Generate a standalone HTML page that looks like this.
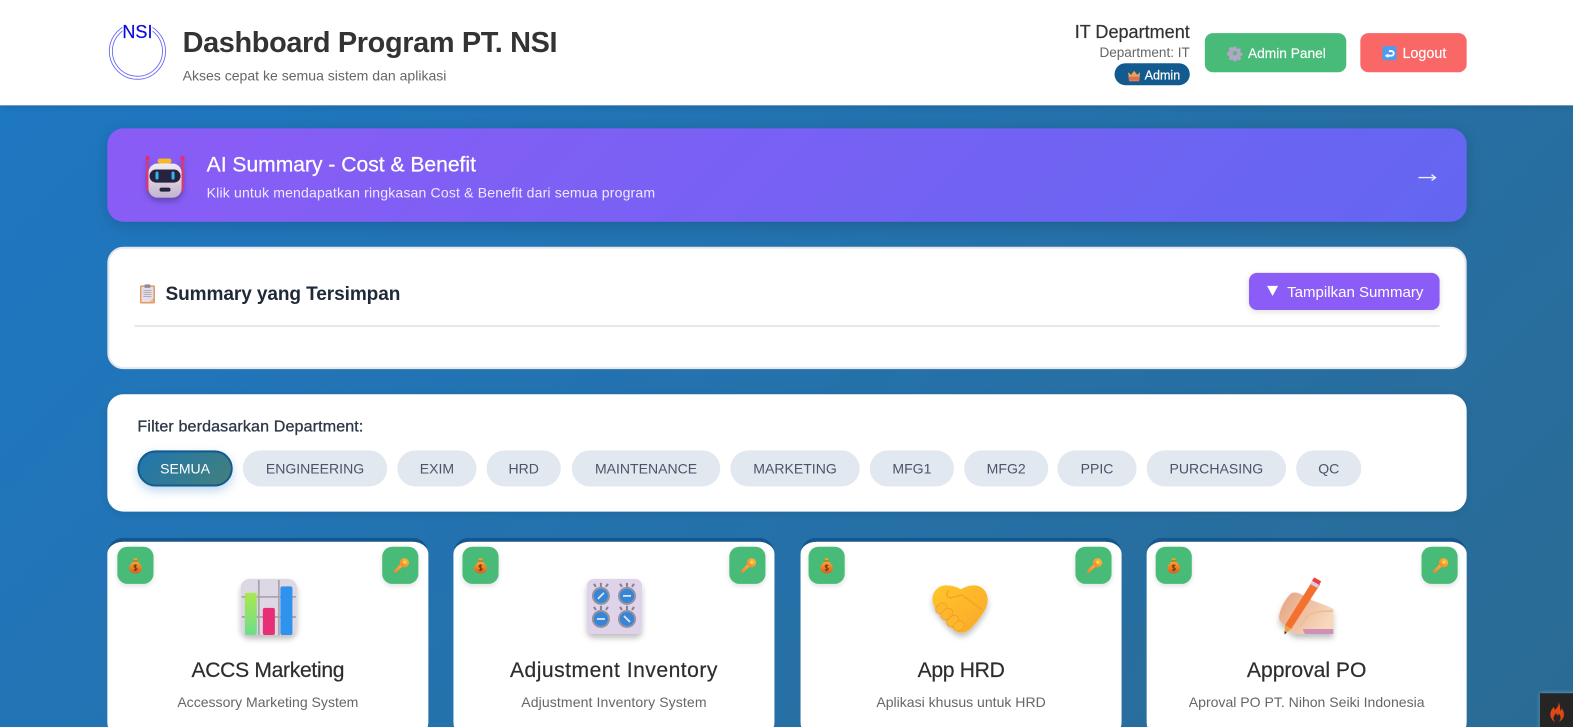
<!DOCTYPE html>
<html lang="id"><head><meta charset="utf-8"><title>Dashboard Program PT. NSI</title>
<style>
*{box-sizing:border-box;margin:0;padding:0}
html,body{width:1573px;height:727px;overflow:hidden}
body{position:relative;font-family:"Liberation Sans",sans-serif;background:linear-gradient(135deg,#1e78c4 0%,#2a6b94 100%);}
#w{position:absolute;left:0;top:0;width:1568px;height:725px;transform:scale(1.00319);transform-origin:0 0}
.a{position:absolute}
.t{position:absolute;white-space:nowrap;line-height:1}
.c{text-align:center}
.p{position:absolute;top:449px;height:36px;border-radius:18px;background:#e2e8f0;color:#4a5568;font-size:14px;line-height:36px;text-align:center}
.card{position:absolute;top:536px;height:200px;background:#fff;border-radius:16px;border-top:4px solid #15578c}
.g{position:absolute;top:545px;width:36px;height:37px;border-radius:10px;background:#48bb78;box-shadow:0 2px 5px rgba(0,0,0,.12)}
.h{font-size:21px;color:#2d2d2d;-webkit-text-stroke:.2px #2d2d2d;line-height:24px;top:657px}
.d{font-size:14px;color:#666;top:693px}
svg{position:absolute;display:block;overflow:visible}
</style></head><body>
<svg width="0" height="0" style="position:absolute">
<defs>
<linearGradient id="bag" x1="0" y1="0" x2="0" y2="1"><stop offset="0" stop-color="#f9a532"/><stop offset="1" stop-color="#d9601f"/></linearGradient>
<linearGradient id="key" x1="0" y1="1" x2="1" y2="0"><stop offset="0" stop-color="#f47c3c"/><stop offset="1" stop-color="#fbc02d"/></linearGradient>
<linearGradient id="gb" x1="0" y1="0" x2="0" y2="1"><stop offset="0" stop-color="#a9e84f"/><stop offset="1" stop-color="#6fdc8c"/></linearGradient>
<linearGradient id="hy" x1="0" y1="0" x2="1" y2="1"><stop offset="0" stop-color="#ffc62c"/><stop offset="1" stop-color="#fba72a"/></linearGradient>
<linearGradient id="skin" x1="0" y1="0" x2="1" y2=".5"><stop offset="0" stop-color="#e4a27e"/><stop offset="1" stop-color="#f8d8bd"/></linearGradient>
<linearGradient id="rob" x1="0" y1="0" x2="0" y2="1"><stop offset="0" stop-color="#f0ebf2"/><stop offset="1" stop-color="#c4b3cc"/></linearGradient>
<filter id="ds" x="-30%" y="-30%" width="160%" height="170%"><feDropShadow dx="0" dy="4" stdDeviation="3" flood-color="#000" flood-opacity=".25"/></filter>
<symbol id="bagI" viewBox="0 0 14 16"><path d="M5 0.5h4L8.4 3h-2.800z" fill="#f5a623"/><rect x="5" y="2.600" width="4" height="1.300" rx=".6" fill="#b5651d"/><path d="M5.200 3.800C2.500 5.500.6 8 .6 10.600c0 3 2.600 4.900 6.400 4.900s6.400-1.900 6.400-4.900c0-2.600-1.900-5.100-4.600-6.800z" fill="url(#bag)"/><path d="M8.700 7.800C8.300 7.100 5.600 7 5.600 8.500c0 1.700 3 1 3 2.700 0 1.500-2.800 1.400-3.300.6M7 6.600v6.600" stroke="#7c3512" stroke-width="1" fill="none"/></symbol>
<symbol id="keyI" viewBox="0 0 16 16"><path d="M1.500 14.800l-.9-.9a.9.9 0 0 1 0-1.200L8 5.500l2.300 2.300-7.500 7a.9.900 0 0 1-1.300 0z" fill="url(#key)"/><circle cx="11" cy="5" r="4.600" fill="url(#key)"/><circle cx="11.400" cy="4.400" r="1.700" fill="#fcd34d"/></symbol>
<symbol id="gearI" viewBox="0 0 16 16"><path d="M6.600.8h2.800l.4 2 1.300.6 1.800-1.100 2 2-1.100 1.800.6 1.300 2 .4v2.800l-2 .4-.6 1.300 1.100 1.800-2 2-1.800-1.100-1.300.6-.4 2H6.600l-.4-2-1.300-.6-1.800 1.100-2-2 1.100-1.800-.6-1.300-2-.4V6.600l2-.4.600-1.300L1.100 3.100l2-2 1.800 1.100 1.300-.6z" transform="translate(.7 .7) scale(.91)" fill="#b3a5c4"/><circle cx="8" cy="8" r="2.300" fill="#48bb78" opacity=".75"/></symbol>
</defs></svg>
<div id="w">
<!-- Header -->
<div class="a" style="left:0;top:0;width:1568px;height:104.700px;background:#fff;box-shadow:0 2px 6px rgba(0,0,0,.1)"></div>
<svg style="left:107px;top:20px" width="60" height="62" viewBox="0 0 60 62">
<circle cx="30" cy="31" r="28" fill="none" stroke="#6a6af5" stroke-width=".9"/>
<circle cx="30" cy="31" r="25" fill="none" stroke="#6a6af5" stroke-width=".9"/>
<rect x="15" y="0" width="30" height="15" fill="#fff"/>
<text x="30" y="18" text-anchor="middle" font-family="Liberation Sans,sans-serif" font-size="18" fill="#0a0ae0" stroke="#0a0ae0" stroke-width=".2">NSI</text>
</svg>
<div class="t" style="left:182px;top:27px;font-size:28.800px;font-weight:700;color:#333;line-height:32px;letter-spacing:-.36px">Dashboard Program PT. NSI</div>
<div class="t" style="left:182px;top:68px;font-size:14px;color:#666">Akses cepat ke semua sistem dan aplikasi</div>
<div class="t" style="right:382px;top:23px;font-size:18px;color:#333;-webkit-text-stroke:.2px #333">IT Department</div>
<div class="t" style="right:382px;top:46px;font-size:13.500px;color:#666">Department: IT</div>
<div class="a" style="left:1111px;top:63px;width:75px;height:22px;border-radius:11px;background:#135a8e"></div>
<svg style="left:1124px;top:70px" width="13" height="11" viewBox="0 0 13 11"><path d="M.5 2l3 2.500L6.500.5l3 4 3-2.500-1 9h-10z" fill="#f0a050"/><rect x="1.500" y="6.500" width="10" height="4" fill="#d9705a"/></svg>
<div class="t" style="left:1141px;top:69px;font-size:12.500px;color:#fff;-webkit-text-stroke:.2px #fff">Admin</div>
<div class="a" style="left:1201px;top:33px;width:141px;height:39px;border-radius:8px;background:#48bb78"></div>
<svg style="left:1223px;top:45px" width="16" height="16"><use href="#gearI" width="16" height="16"/></svg>
<div class="t" style="left:1244px;top:47px;font-size:13.700px;color:#fff;-webkit-text-stroke:.15px #fff">Admin Panel</div>
<div class="a" style="left:1356px;top:33px;width:106px;height:39px;border-radius:8px;background:#f96767"></div>
<svg style="left:1378px;top:46px" width="14" height="14" viewBox="0 0 14 14"><rect width="14" height="14" rx="2" fill="#4c9df0"/><path d="M3 9.500h6a2.300 2.300 0 0 0 0-4.600H6.500" stroke="#fff" stroke-width="1.800" fill="none"/><path d="M6 7.500L2.800 9.500 6 11.800z" fill="#fff"/></svg>
<div class="t" style="left:1398px;top:47px;font-size:14.300px;color:#fff;-webkit-text-stroke:.15px #fff">Logout</div>

<!-- AI banner -->
<div class="a" style="left:107px;top:128px;width:1355px;height:92.500px;border-radius:16px;background:linear-gradient(135deg,#8b5cf6,#6366f1);box-shadow:0 4px 15px rgba(0,0,0,.15)"></div>
<svg style="left:141px;top:154px" width="46" height="46" viewBox="0 0 46 46">
<g filter="url(#ds)"><rect x="5" y="4" width="2" height="32" rx="1" fill="#e8325f"/><rect x="40" y="4" width="2" height="32" rx="1" fill="#e8325f"/><circle cx="6" cy="3.500" r="2" fill="#f0286a"/><circle cx="41" cy="3.500" r="2" fill="#f0286a"/><rect x="16" y="4" width="14" height="5" rx="2.500" fill="#f2b92b"/><rect x="7" y="9" width="33" height="34" rx="9" fill="url(#rob)"/></g>
<rect x="8" y="15" width="31" height="13" rx="6.500" fill="#27223f"/><rect x="14" y="17" width="3" height="8" rx="1.500" fill="#2fb5f0"/><rect x="30" y="17" width="3" height="8" rx="1.500" fill="#2fb5f0"/><rect x="18" y="33" width="11" height="4" rx="2" fill="#27223f"/></svg>
<div class="t" style="left:206px;top:152.500px;font-size:21px;color:#fff;-webkit-text-stroke:.25px #fff;line-height:24px">AI Summary - Cost &amp; Benefit</div>
<div class="t" style="left:206px;top:184.500px;font-size:14px;color:#f0eaff;letter-spacing:.16px">Klik untuk mendapatkan ringkasan Cost &amp; Benefit dari semua program</div>
<svg style="left:1414px;top:171px" width="18" height="12" viewBox="0 0 18 12"><path d="M0 6h16" stroke="#eef" stroke-width="1.400"/><path d="M13 3l4 3-4 3" stroke="#eef" stroke-width="1.300" fill="none"/></svg>

<!-- Saved summary -->
<div class="a" style="left:107px;top:246px;width:1355px;height:122px;border-radius:16px;background:#fff;border:2px solid #e5e7eb"></div>
<svg style="left:139px;top:283px" width="18" height="20" viewBox="0 0 18 20"><rect x=".5" y="1.500" width="15" height="18" rx="1.500" fill="#e39a63"/><rect x="2" y="3" width="12" height="15" fill="#e3deea"/><rect x="5" y=".5" width="6" height="3.500" rx="1" fill="#8d8a99"/><path d="M4 6.500h8M4 8.500h8M4 10.500h8M4 12.500h8" stroke="#a8a3b5" stroke-width=".9"/><path d="M10 18l4-4v4z" fill="#f2b888"/></svg>
<div class="t" style="left:165px;top:283px;font-size:19px;font-weight:700;color:#1f2937;line-height:22px;letter-spacing:-.1px">Summary yang Tersimpan</div>
<div class="a" style="left:134px;top:324px;width:1301px;height:2px;background:#e5e7eb"></div>
<div class="a" style="left:1245px;top:272px;width:190px;height:37px;border-radius:8px;background:#8b5cf6;box-shadow:0 2px 6px rgba(0,0,0,.12)"></div>
<svg style="left:1263px;top:285px" width="11" height="10" viewBox="0 0 11 10"><path d="M0 0h11L5.500 10z" fill="#fff"/></svg>
<div class="t" style="left:1283px;top:284px;font-size:15px;color:#fff">Tampilkan Summary</div>

<!-- Filter -->
<div class="a" style="left:107px;top:393px;width:1355px;height:117px;border-radius:16px;background:#fff;box-shadow:0 2px 8px rgba(0,0,0,.08)"></div>
<div class="t" style="left:137px;top:418px;font-size:16px;letter-spacing:.13px;color:#2d3748;-webkit-text-stroke:.3px #2d3748">Filter berdasarkan Department:</div>
<div class="p" style="left:137px;width:95px;background:linear-gradient(135deg,#2076ae,#43807c);border:2px solid #135a8e;color:#fff;line-height:32px;box-shadow:0 4px 10px rgba(30,120,196,.3)">SEMUA</div>
<div class="p" style="left:242px;width:144px">ENGINEERING</div>
<div class="p" style="left:396px;width:79px">EXIM</div>
<div class="p" style="left:485px;width:74px">HRD</div>
<div class="p" style="left:570px;width:148px">MAINTENANCE</div>
<div class="p" style="left:728px;width:129px">MARKETING</div>
<div class="p" style="left:867px;width:84px">MFG1</div>
<div class="p" style="left:961px;width:84px">MFG2</div>
<div class="p" style="left:1054px;width:79px">PPIC</div>
<div class="p" style="left:1143px;width:139px">PURCHASING</div>
<div class="p" style="left:1292px;width:65px">QC</div>

<!-- Cards -->
<div class="card" style="left:107px;width:320px"></div>
<div class="card" style="left:452px;width:320px"></div>
<div class="card" style="left:798px;width:320px"></div>
<div class="card" style="left:1143px;width:319px"></div>

<div class="g" style="left:117px"></div><svg style="left:128px;top:556px" width="14" height="16"><use href="#bagI" width="14" height="16"/></svg>
<div class="g" style="left:381px"></div><svg style="left:392px;top:556px" width="16" height="16"><use href="#keyI" width="16" height="16"/></svg>
<div class="g" style="left:461px"></div><svg style="left:472px;top:556px" width="14" height="16"><use href="#bagI" width="14" height="16"/></svg>
<div class="g" style="left:727px"></div><svg style="left:738px;top:556px" width="16" height="16"><use href="#keyI" width="16" height="16"/></svg>
<div class="g" style="left:806px"></div><svg style="left:817px;top:556px" width="14" height="16"><use href="#bagI" width="14" height="16"/></svg>
<div class="g" style="left:1072px"></div><svg style="left:1083px;top:556px" width="16" height="16"><use href="#keyI" width="16" height="16"/></svg>
<div class="g" style="left:1152px"></div><svg style="left:1163px;top:556px" width="14" height="16"><use href="#bagI" width="14" height="16"/></svg>
<div class="g" style="left:1417px"></div><svg style="left:1428px;top:556px" width="16" height="16"><use href="#keyI" width="16" height="16"/></svg>

<!-- Chart icon -->
<svg style="left:239.500px;top:576.500px" width="56" height="56" viewBox="0 0 56 56">
<g filter="url(#ds)"><rect width="56" height="56" rx="9" fill="#ddd8e4"/></g>
<path d="M18 1v55M38 1v55M1 18h54M1 38h54" stroke="#aaa5b1" stroke-width="1.800"/>
<rect x="4" y="14" width="12" height="42" rx="2" fill="url(#gb)"/>
<rect x="22" y="29" width="12" height="27" rx="2" fill="#e62f75"/>
<rect x="39.500" y="7.500" width="12" height="48.500" rx="2" fill="#2f93ee"/>
</svg>
<!-- Knobs icon -->
<svg style="left:585px;top:577px" width="55" height="55" viewBox="0 0 55 55">
<g filter="url(#ds)"><rect width="55" height="55" rx="7" fill="#dfd3ea"/></g>
<g stroke="#858290" stroke-width="2"><path d="M14 4v4M7 5l2 3M21 5l-2 3M40 4v4M33 5l2 3M47 5l-2 3M14 27v4M7 28l2 3M21 28l-2 3M40 27v4M33 28l2 3M47 28l-2 3"/></g>
<g fill="#9592a0"><circle cx="14" cy="17" r="9"/><circle cx="40" cy="17" r="9"/><circle cx="14" cy="40" r="9"/><circle cx="40" cy="40" r="9"/></g>
<g fill="#3586d8"><circle cx="14" cy="17" r="7"/><circle cx="40" cy="17" r="7"/><circle cx="14" cy="40" r="7"/><circle cx="40" cy="40" r="7"/></g>
<path d="M11 20l6-6M36 17h8M10 40h8M37 37l6 6" stroke="#e8e4ef" stroke-width="1.800"/>
</svg>
<!-- Handshake -->
<svg style="left:929px;top:583px" width="56" height="50" viewBox="0 0 56 50">
<g filter="url(#ds)"><path d="M14 .5C6 .5.500 7 .500 14.500c0 7 5 12 9 17 5 6 12 15 19 16 5 .7 8-2 12-6 5-5 9-11 12-16 2-4 3-7 3-11C55.500 7 50 .5 42 .5c-5.500 0-10 2-13 4C25 2 20 .5 14 .5z" fill="url(#hy)"/></g>
<path d="M17 6c-3 2-3 6 1 7 5-1 8-2 12-3l20 15" stroke="#f2a324" stroke-width="1.300" fill="none"/>
<g fill="#fdb72e" stroke="#ee9a20" stroke-width=".7"><rect x="3" y="19" width="12" height="9" rx="4.500" transform="rotate(-40 9 23)"/><rect x="8" y="25" width="13" height="9" rx="4.500" transform="rotate(-40 14 29)"/><rect x="14" y="32" width="13" height="9" rx="4.500" transform="rotate(-40 20 36)"/><rect x="21" y="37" width="11" height="9" rx="4.500" transform="rotate(-40 26 41)"/></g>
</svg>
<!-- Writing hand -->
<svg style="left:1274px;top:575px" width="56" height="58" viewBox="0 0 56 58">
<g filter="url(#ds)"><path d="M1 41C1 33 8 20 14 16c3-1 6 0 8 1l13 7c6 2 14 5 20 8v25H19c-3 0-7-3-9-6L5 47c-2-2-4-4-4-6z" fill="url(#skin)"/></g>
<path d="M25 52h30v5H28c-2 0-3-2-3-5z" fill="#cf90b5"/>
<path d="M27 40c6-5 14-6 28-6M22 50c2-5 4-7 8-10" stroke="#eabf9f" stroke-width="1.800" fill="none"/>
<path d="M35 3l7 4.500L13 52l-6-4z" fill="#f4702e"/>
<path d="M36 .5l7 4-2.500 4-7-4z" fill="#f03e3e"/>
<path d="M34 4l7 4-2 3-7-4z" fill="#d9cde4"/>
<path d="M7 48l6 4-6.500 5.500z" fill="#f0a040"/><path d="M6.500 54l2 1.500-2 2z" fill="#3a2030"/>
</svg>

<div class="t c h" style="left:107px;width:320px;letter-spacing:-.3px">ACCS Marketing</div>
<div class="t c h" style="left:452px;width:320px;letter-spacing:.5px">Adjustment Inventory</div>
<div class="t c h" style="left:798px;width:320px;letter-spacing:-.3px">App HRD</div>
<div class="t c h" style="left:1143px;width:319px">Approval PO</div>
<div class="t c d" style="left:107px;width:320px">Accessory Marketing System</div>
<div class="t c d" style="left:452px;width:320px;letter-spacing:.1px">Adjustment Inventory System</div>
<div class="t c d" style="left:798px;width:320px">Aplikasi khusus untuk HRD</div>
<div class="t c d" style="left:1143px;width:319px">Aproval PO PT. Nihon Seiki Indonesia</div>

<!-- Debug bar badge -->
<div class="a" style="left:1535px;top:691px;width:40px;height:40px;background:#252525;box-shadow:0 0 4px rgba(255,255,255,.35)"></div>
<svg style="left:1545px;top:700px" width="16" height="20" viewBox="0 0 20 22" preserveAspectRatio="none"><path d="M10.500 0c1 4-1.500 5.500-4 8.500C5 6.800 5 6 5.300 5 2 7.500.5 10.500.5 13c0 4.500 3 7.500 6.500 8.500-2-1.500-3-3-2.500-5 .5-2 2.500-3 3-5 .5 1.500 1.500 2 2.500 3.500.5-1 1-1.500.8-2.500 1.800 1.500 2.700 3 2.400 5-.2 1.800-1.200 3-2.700 4 4-1 7-4 7-8 0-3-1.500-5-3-7-.2 1.500-.6 2.300-1.800 3C12.800 6.500 13 3 10.500 0z" fill="#dd4814"/></svg>
</div>
</body></html>
